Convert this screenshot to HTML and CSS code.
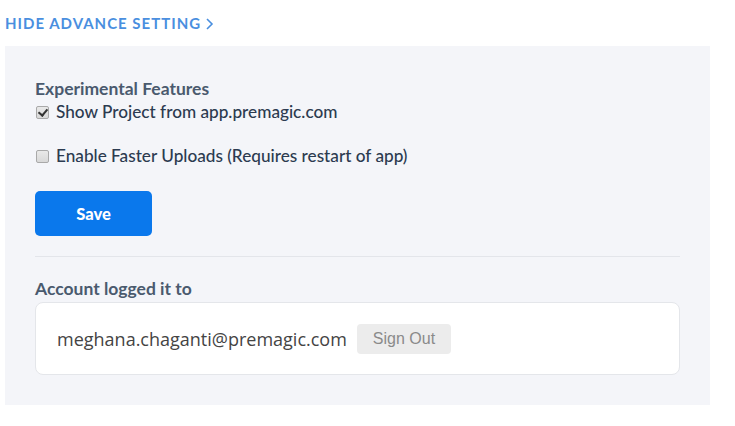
FILE: index.html
```html
<!DOCTYPE html>
<html>
<head>
<meta charset="utf-8">
<link rel="stylesheet" href="styles.css">
</head>
<body>
<div class="page">
  <a class="toggle">HIDE ADVANCE SETTING <svg class="chev" width="9" height="14" viewBox="0 0 9 14"><path d="M2 2 L7 7 L2 12" fill="none" stroke="#4a8fdf" stroke-width="1.6"/></svg></a>
  <div class="panel">
    <div class="section-title">Experimental Features</div>
    <label class="check first"><input type="checkbox" checked><span>Show Project from app.premagic.com</span></label>
    <label class="check second"><input type="checkbox"><span>Enable Faster Uploads (Requires restart of app)</span></label>
    <button class="save">Save</button>
    <hr class="divider">
    <div class="section-title account">Account logged it to</div>
    <div class="card">
      <span class="email">meghana.chaganti@premagic.com</span>
      <button class="signout">Sign Out</button>
    </div>
  </div>
</div>
</body>
</html>
```
FILE: styles.css
```css
* { box-sizing: border-box; }
html, body { margin: 0; padding: 0; background: #fff; }
body { font-family: "Lato", "Liberation Sans", sans-serif; }
.page { padding: 13px 0 0 5px; width: 710px; }
.toggle {
  display: flex; align-items: center; gap: 4px;
  color: #4a8fdf; font-weight: 700; font-size: 15px; letter-spacing: 1px;
  height: 20px; text-decoration: none;
}
.chev { margin-top: 1px; }
.panel {
  margin-top: 13px;
  background: #f4f5f9;
  padding: 33px 30px 30px 30px;
  display: flex; flex-direction: column;
}
.section-title { color: #4a5a6e; font-weight: 700; font-size: 17.5px; line-height: 20px; }
.check { display: flex; align-items: center; color: #2c3b50; font-size: 17.2px; line-height: 20px; font-weight: 500; }
.check input {
  appearance: none; -webkit-appearance: none;
  margin: 0 7px 0 1px; width: 13px; height: 13px;
  border: 1px solid #a9a9a9; border-radius: 2px;
  background: linear-gradient(#e9e9e9, #d8d8d8);
  position: relative;
}
.check input:checked::after {
  content: ""; position: absolute; left: 3px; top: 0px;
  width: 4px; height: 7px;
  border: solid #333; border-width: 0 2px 2px 0;
  transform: rotate(40deg);
}
.check.first { margin-top: 3px; }
.check.second { margin-top: 24px; }
.save {
  margin-top: 25px; width: 117px; height: 45px;
  background: #0a78ec; color: #fff; border: none; border-radius: 5px;
  font-family: inherit; font-weight: 900; font-size: 16.5px;
}
.divider { border: none; border-top: 1px solid #e3e5ea; margin: 20px 0 0 0; width: 100%; }
.account { margin-top: 22px; }
.card {
  margin-top: 3px; height: 73px; background: #fff;
  border: 1px solid #e4e6ea; border-radius: 8px;
  display: flex; align-items: center; padding: 0 21px;
  gap: 10px;
}
.email { font-family: "Open Sans", sans-serif; font-size: 18px; color: #444; }
.signout {
  font-family: "Liberation Sans", Arial, sans-serif; font-size: 16px;
  color: #8a8a8a; background: #ececec; border: none; border-radius: 4px;
  height: 30px; padding: 0 16px;
}
```
